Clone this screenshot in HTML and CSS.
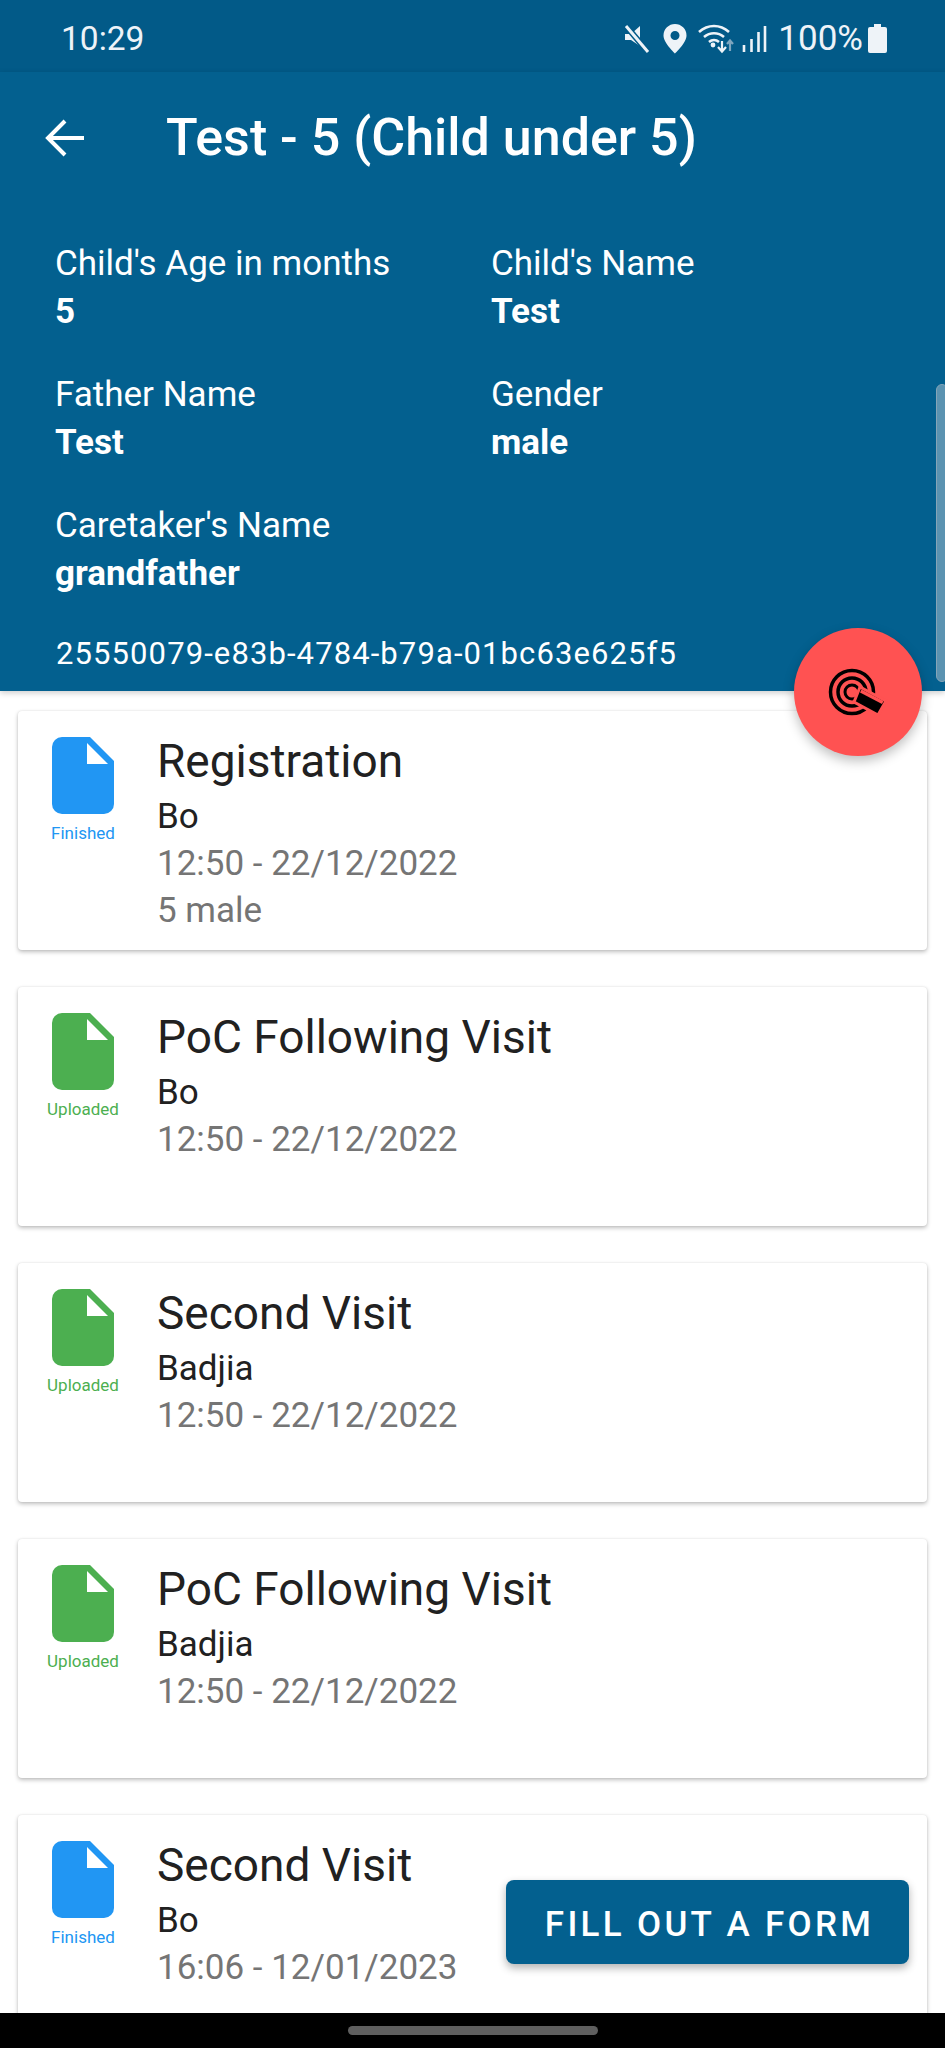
FILE: index.html
```html
<!DOCTYPE html>
<html lang="en">
<head>
    <meta charset="UTF-8">
    <meta name="viewport" content="width=device-width, initial-scale=1.0">
    <title>Test - 5 (Child under 5)</title>
    <link rel="stylesheet" href="styles.css">
</head>
<body>
    <div class="screen">
        <!-- Status bar -->
        <div class="status-bar">
            <span class="clock">10:29</span>
            <div class="status-icons">
                <svg class="ic-mute" width="26" height="30" viewBox="0 0 26 30"><path d="M1 10h6l9-8v20l-9-6H1z" fill="#eef3f8"/><path d="M2 2l22 26" stroke="#025a88" stroke-width="6"/><path d="M2 2l22 26" stroke="#eef3f8" stroke-width="3"/></svg>
                <svg class="ic-pin" width="24" height="30" viewBox="0 0 24 30"><path fill-rule="evenodd" d="M12 0a11.500 11.500 0 0 1 11.500 11.500C23.500 19 12 29.500 12 29.500S.5 19 .5 11.500A11.500 11.500 0 0 1 12 0zm0 7a4.500 4.500 0 1 0 0 9 4.500 4.500 0 0 0 0-9z" fill="#eef3f8"/></svg>
                <svg class="ic-wifi" width="38" height="30" viewBox="0 0 38 30"><path d="M1 8c9-8 21-8 30 0M6 13c6-5 14-5 20 0M11 18c3-2.500 7-2.500 10 0" fill="none" stroke="#eef3f8" stroke-width="2.600"/><circle cx="15" cy="21" r="2.400" fill="#eef3f8"/><path d="M24 17v10M20 23l4 4.500 4-4.500" fill="none" stroke="#eef3f8" stroke-width="2.200"/><path d="M32 27V17M29 20l3-3.500 3 3.500" fill="none" stroke="#7fa6bf" stroke-width="2.200"/></svg>
                <svg class="ic-signal" width="25" height="28" viewBox="0 0 25 28"><path d="M2 20v7M9.500 14v13M16.500 7v20M23 1v26" fill="none" stroke="#eef3f8" stroke-width="2.600"/></svg>
                <span class="battery-text">100%</span>
                <svg class="ic-battery" width="19" height="29" viewBox="0 0 19 29"><path d="M6 0h7v3h4a2 2 0 0 1 2 2v22a2 2 0 0 1-2 2H2a2 2 0 0 1-2-2V5a2 2 0 0 1 2-2h4z" fill="#eef3f8"/></svg>
            </div>
        </div>

        <!-- Header with child details -->
        <div class="header">
            <div class="toolbar">
                <svg class="back" width="40" height="38" viewBox="0 0 40 38"><path d="M39 19H3M20 2L3 19l17 17" fill="none" stroke="#fff" stroke-width="4"/></svg>
                <h1>Test - 5 (Child under 5)</h1>
            </div>
            <div class="details">
                <div class="detail"><div class="label">Child's Age in months</div><div class="value">5</div></div>
                <div class="detail"><div class="label">Child's Name</div><div class="value">Test</div></div>
                <div class="detail"><div class="label">Father Name</div><div class="value">Test</div></div>
                <div class="detail"><div class="label">Gender</div><div class="value">male</div></div>
                <div class="detail"><div class="label">Caretaker's Name</div><div class="value">grandfather</div></div>
            </div>
            <div class="uuid">25550079-e83b-4784-b79a-01bc63e625f5</div>
        </div>

        <!-- Form list -->
        <div class="list">
            <div class="card">
                <div class="status finished">
                    <svg width="62" height="77" viewBox="0 0 62 77"><path d="M10 0h28l24 24v43a10 10 0 0 1-10 10H10A10 10 0 0 1 0 67V10A10 10 0 0 1 10 0z" fill="currentColor"/><path d="M35 6l21 21H35z" fill="#fff"/></svg>
                    <span>Finished</span>
                </div>
                <div class="info">
                    <div class="form-name">Registration</div>
                    <div class="place">Bo</div>
                    <div class="meta">12:50 - 22/12/2022</div>
                    <div class="meta">5 male</div>
                </div>
            </div>
            <div class="card">
                <div class="status uploaded">
                    <svg width="62" height="77" viewBox="0 0 62 77"><path d="M10 0h28l24 24v43a10 10 0 0 1-10 10H10A10 10 0 0 1 0 67V10A10 10 0 0 1 10 0z" fill="currentColor"/><path d="M35 6l21 21H35z" fill="#fff"/></svg>
                    <span>Uploaded</span>
                </div>
                <div class="info">
                    <div class="form-name">PoC Following Visit</div>
                    <div class="place">Bo</div>
                    <div class="meta">12:50 - 22/12/2022</div>
                </div>
            </div>
            <div class="card">
                <div class="status uploaded">
                    <svg width="62" height="77" viewBox="0 0 62 77"><path d="M10 0h28l24 24v43a10 10 0 0 1-10 10H10A10 10 0 0 1 0 67V10A10 10 0 0 1 10 0z" fill="currentColor"/><path d="M35 6l21 21H35z" fill="#fff"/></svg>
                    <span>Uploaded</span>
                </div>
                <div class="info">
                    <div class="form-name">Second Visit</div>
                    <div class="place">Badjia</div>
                    <div class="meta">12:50 - 22/12/2022</div>
                </div>
            </div>
            <div class="card">
                <div class="status uploaded">
                    <svg width="62" height="77" viewBox="0 0 62 77"><path d="M10 0h28l24 24v43a10 10 0 0 1-10 10H10A10 10 0 0 1 0 67V10A10 10 0 0 1 10 0z" fill="currentColor"/><path d="M35 6l21 21H35z" fill="#fff"/></svg>
                    <span>Uploaded</span>
                </div>
                <div class="info">
                    <div class="form-name">PoC Following Visit</div>
                    <div class="place">Badjia</div>
                    <div class="meta">12:50 - 22/12/2022</div>
                </div>
            </div>
            <div class="card">
                <div class="status finished">
                    <svg width="62" height="77" viewBox="0 0 62 77"><path d="M10 0h28l24 24v43a10 10 0 0 1-10 10H10A10 10 0 0 1 0 67V10A10 10 0 0 1 10 0z" fill="currentColor"/><path d="M35 6l21 21H35z" fill="#fff"/></svg>
                    <span>Finished</span>
                </div>
                <div class="info">
                    <div class="form-name">Second Visit</div>
                    <div class="place">Bo</div>
                    <div class="meta">16:06 - 12/01/2023</div>
                </div>
            </div>
        </div>

        <!-- Things floating over the list -->
        <div class="scrollbar"></div>
        <div class="fab">
            <svg width="60" height="56" viewBox="0 0 60 56"><circle cx="24" cy="28" r="21.500" fill="none" stroke="#000" stroke-width="3.500"/><circle cx="24" cy="28" r="14" fill="none" stroke="#000" stroke-width="3.500"/><circle cx="24" cy="28" r="7" fill="none" stroke="#000" stroke-width="3"/><path d="M32 23l26 14-8 14-24-13z" fill="#000" stroke="#ff5252" stroke-width="3"/><path d="M33.500 25.500l-1.500 3 22 11.500 1.500-3z" fill="#ff5252"/></svg>
        </div>
        <button class="fill-button">FILL OUT A FORM</button>

        <!-- Navigation bar -->
        <div class="nav-bar"><div class="nav-handle"></div></div>
    </div>
</body>
</html>
```

FILE: styles.css
```css
* {
    box-sizing: border-box;
}
html, body {
    margin: 0;
    padding: 0;
}
body {
    font-family: Roboto, "Noto Sans", sans-serif;
    background-color: #fff;
}
.screen {
    position: relative;
    width: 945px;
    height: 2048px;
    display: flex;
    flex-direction: column;
    overflow: hidden;
}
.status-bar {
    height: 72px;
    flex: none;
    display: flex;
    align-items: center;
    justify-content: space-between;
    padding: 5px 58px 0 61px;
    background-color: #025a88;
    color: #eef3f8;
}
.clock {
    font-size: 33.500px;
}
.status-icons {
    display: flex;
    align-items: center;
}
.ic-pin {
    margin-left: 13px;
}
.ic-wifi {
    margin-left: 11px;
}
.ic-signal {
    margin-left: 6px;
}
.battery-text {
    font-size: 35px;
    margin-left: 11px;
    margin-right: 5px;
}
.header {
    height: 619px;
    flex: none;
    background-color: #03608f;
    color: #fff;
    box-shadow: 0 2px 6px rgba(0, 0, 0, 0.2);
    z-index: 1;
}
.toolbar {
    display: flex;
    align-items: center;
    height: 121px;
    padding: 10px 0 0 45px;
}
.toolbar h1 {
    margin: 0 0 0 81px;
    font-size: 52px;
    font-weight: 500;
}
.details {
    display: grid;
    grid-template-columns: 436px 1fr;
    grid-auto-rows: 131px;
    padding: 48px 0 0 55px;
    height: 441px;
}
.label {
    font-size: 35px;
    line-height: 46px;
}
.value {
    font-size: 35px;
    line-height: 49px;
    font-weight: 700;
}
.uuid {
    padding-left: 56px;
    font-size: 31px;
    letter-spacing: 1.100px;
    line-height: 40px;
}
.list {
    flex: 1;
    overflow: hidden;
    padding: 20px 18px 0;
    display: flex;
    flex-direction: column;
    gap: 37px;
}
.card {
    flex: none;
    height: 239px;
    display: flex;
    background-color: #fff;
    border-radius: 4px;
    box-shadow: 0 2px 4px rgba(0, 0, 0, 0.25), 0 0 2px rgba(0, 0, 0, 0.1);
}
.status {
    width: 130px;
    flex: none;
    display: flex;
    flex-direction: column;
    align-items: center;
    padding-top: 26px;
}
.status span {
    font-size: 17px;
    line-height: 20px;
    margin-top: 9px;
}
.finished {
    color: #2196f3;
}
.uploaded {
    color: #4caf50;
}
.info {
    padding: 24px 0 0 9px;
}
.form-name {
    font-size: 46px;
    line-height: 52px;
    color: #212121;
}
.place {
    font-size: 35px;
    line-height: 47px;
    margin-top: 6px;
    color: #212121;
}
.meta {
    font-size: 35px;
    line-height: 47px;
    color: #757575;
}
.scrollbar {
    position: absolute;
    left: 936px;
    top: 384px;
    width: 12px;
    height: 298px;
    border-radius: 6px;
    background-color: #5b93b1;
    border: 1px solid #85a5b8;
    z-index: 2;
}
.fab {
    position: absolute;
    left: 794px;
    top: 628px;
    width: 128px;
    height: 128px;
    border-radius: 50%;
    background-color: #ff5252;
    box-shadow: 0 5px 12px rgba(0, 0, 0, 0.25);
    display: flex;
    align-items: center;
    justify-content: center;
    z-index: 3;
}
.fill-button {
    position: absolute;
    left: 506px;
    top: 1880px;
    width: 403px;
    height: 84px;
    padding: 4px 0 0 4px;
    border: none;
    border-radius: 8px;
    background-color: #03608f;
    color: #fff;
    font-family: inherit;
    font-size: 35px;
    font-weight: 500;
    letter-spacing: 3.300px;
    box-shadow: 0 4px 8px rgba(0, 0, 0, 0.3);
    z-index: 3;
}
.nav-bar {
    position: absolute;
    left: 0;
    right: 0;
    bottom: 0;
    height: 35px;
    background-color: #000;
    z-index: 4;
}
.nav-handle {
    width: 250px;
    height: 9px;
    margin: 13px auto 0;
    border-radius: 5px;
    background-color: #5f5f5f;
}
```
